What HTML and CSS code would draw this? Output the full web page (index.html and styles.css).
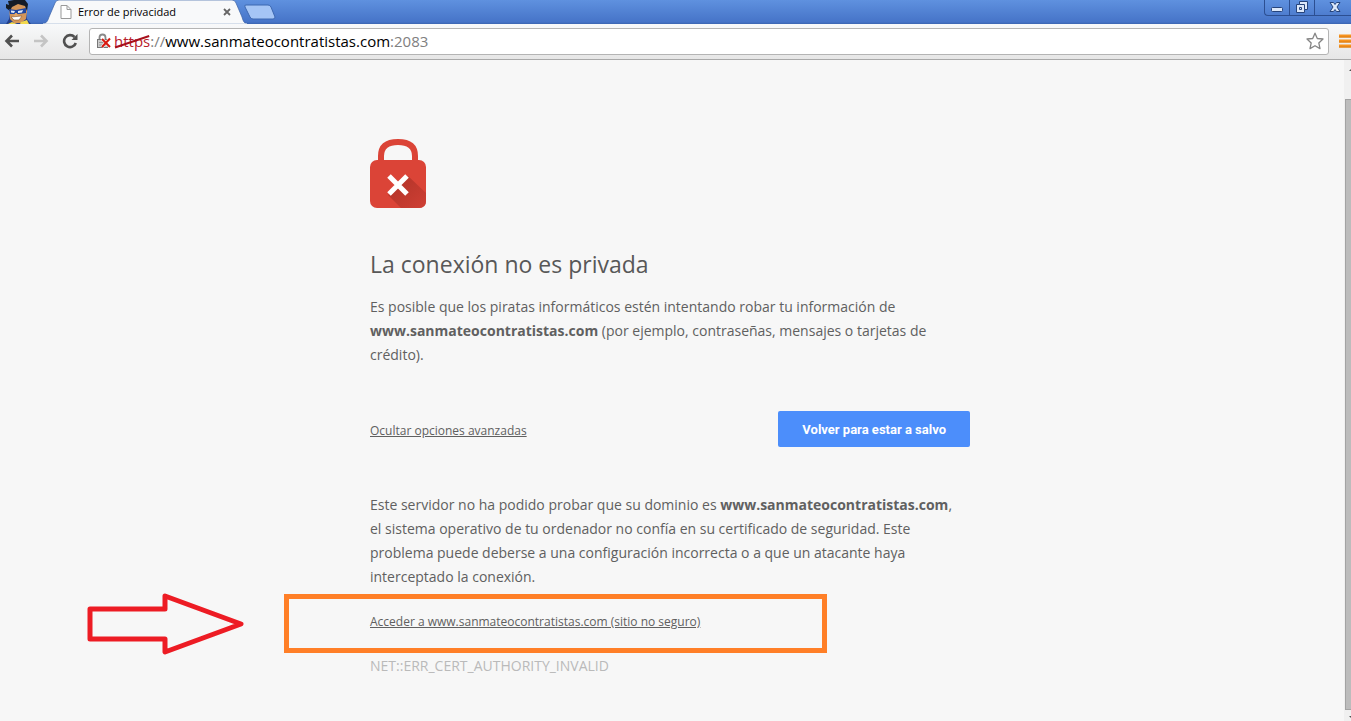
FILE: index.html
```html
<!DOCTYPE html>
<html lang="es">
<head>
<meta charset="utf-8">
<title>Error de privacidad</title>
<link rel="stylesheet" href="styles.css">
</head>
<body>
<header class="titlebar">
  <svg class="avatar" viewBox="0 0 32 24" aria-hidden="true">
    <path d="M10 14 26 12 27 19 31 24H6l3-5Z" fill="#24408c"/>
    <path d="M9 8 12 4 25 4 27 11 26 19 21 23H14L10 19Z" fill="#d39558"/>
    <path d="M6 4 9 5 8 1 14 0H25L28 4 27 11 25 6 18 4 12 7 10 11 6 8Z" fill="#151c26"/>
    <path d="M9 9 16 10 26 8 26 13 19 14 10 14Z" fill="#1e46a0"/>
    <path d="M11 10.500 15 11 14 13 11 12.500ZM18 11 23 10 22 12.500 18 13Z" fill="#dfe9f7"/>
    <path d="M15 13 17 13 18 16 14 16Z" fill="#e0a76b"/>
    <path d="M11 17 22 16 19 20 14 20Z" fill="#fff" stroke="#8a5a35" stroke-width=".6"/>
    <path d="M8 24 12 22 17 24ZM21 22 27 20 29 24H20Z" fill="#f3d94d"/>
  </svg>
  <div class="tab">
    <svg class="tab-shape" viewBox="0 0 204 24" preserveAspectRatio="none" aria-hidden="true">
      <path d="M0 24C4 23 5 20 6 17L12 3Q13 0 16 0H189Q192 0 193 3L199 17C200 21 201 23 204 24Z" fill="#f8f9fa" stroke="#3b62a5" stroke-width=".7"/>
      <path d="M0 23.500H204V24H0Z" fill="#f8f9fa"/>
    </svg>
    <svg class="file-icon" viewBox="0 0 12 14" aria-hidden="true"><path d="M1 .5H7L11 4.500V13.500H1ZM7 .5V4.500H11" fill="#fff" stroke="#999"/></svg>
    <span class="tab-title">Error de privacidad</span>
    <button class="tab-close" aria-label="Cerrar pestaña"><svg viewBox="0 0 8 8"><path d="M1 1 7 7M7 1 1 7" stroke="#666" stroke-width="1.800"/></svg></button>
  </div>
  <button class="new-tab" aria-label="Nueva pestaña">
    <svg viewBox="0 0 32 16"><path d="M2 1H24Q26 1 27 3L31 13Q31 15 29 15H9Q7 15 6 13L1 3Q0 1 2 1Z" fill="#a5c5f5" stroke="#3d68b1"/></svg>
  </button>
  <div class="window-controls">
    <button aria-label="Minimizar"><svg viewBox="0 0 14 14"><rect x="1.500" y="7.500" width="11" height="4" rx="1" fill="#dce8fa" stroke="#26447c"/></svg></button>
    <button aria-label="Restaurar"><svg viewBox="0 0 14 14"><path d="M4.500 1.500H12.500V9.500H9.500V12.500H1.500V4.500H4.500Z" fill="#dce8fa" stroke="#26447c"/><path d="M4.500 4.500H9.500V9.500M4.500 7.500H6.500V9.500H4.500Z" fill="none" stroke="#26447c"/></svg></button>
    <button class="close" aria-label="Cerrar"><svg viewBox="0 0 14 14"><path d="M2 2.500H5.500L7 4.500 8.500 2.500H12L9 7 12 11.500H8.500L7 9.500 5.500 11.500H2L5 7Z" fill="#dce8fa" stroke="#26447c"/></svg></button>
  </div>
</header>

<nav class="toolbar">
  <button class="nav-btn" aria-label="Atrás"><svg viewBox="0 0 16 16"><path d="M15 8H2.500M8 2.500 2.500 8 8 13.500" fill="none" stroke="#505050" stroke-width="2.600"/></svg></button>
  <button class="nav-btn" aria-label="Adelante"><svg viewBox="0 0 16 16"><path d="M1 8H13.500M8 2.500 13.500 8 8 13.500" fill="none" stroke="#c4c4c4" stroke-width="2.600"/></svg></button>
  <button class="nav-btn" aria-label="Recargar"><svg viewBox="0 0 16 16"><path d="M12.500 4A6 6 0 1 0 13.800 10" fill="none" stroke="#505050" stroke-width="2.600"/><path d="M15.500 1V7H9.500Z" fill="#505050"/></svg></button>
  <div class="omnibox">
    <svg class="cert-icon" viewBox="0 0 16 16" aria-hidden="true">
      <path d="M3.500 7V4.500Q3.500 1.500 6.500 1.500T9.500 4.500V7" fill="none" stroke="#888" stroke-width="1.800"/>
      <rect x="1.500" y="6.500" width="10" height="8" fill="#ccc" stroke="#777"/><path d="M3 9.500H10M3 12H10" stroke="#999"/>
      <path d="M6 6 14 14M14 5.500 6 14" stroke="#fff" stroke-width="3"/><path d="M6 6 14 14M14 5.500 6 14" stroke="#d8180e" stroke-width="2"/>
    </svg>
    <div class="url"><span class="scheme">https<svg class="strike" viewBox="0 0 36 14" preserveAspectRatio="none" aria-hidden="true"><path d="M1 12.500 35 1" stroke="#a8101c" stroke-width="2"/></svg></span><span class="dim">://</span>www.sanmateocontratistas.com<span class="dim">:2083</span></div>
    <button class="star" aria-label="Añadir a marcadores"><svg viewBox="0 0 18 18"><path d="M9 1.200 11.300 6.500 17 7 12.800 10.900 14 16.600 9 13.700 4 16.600 5.200 10.900 1 7 6.700 6.500Z" fill="#fff" stroke="#858585" stroke-width="1.300" stroke-linejoin="round"/></svg></button>
  </div>
  <button class="menu" aria-label="Menú"><svg viewBox="0 0 12 14"><path d="M0 2H12M0 7H12M0 12H12" stroke="#f7931e" stroke-width="3"/><path d="M0 3H12M0 8H12M0 13H12" stroke="#d97a10"/></svg></button>
</nav>

<div class="viewport">
  <main class="page">
    <div class="interstitial">
      <svg class="lock" viewBox="0 0 56 69" role="img" aria-label="Conexión no segura">
        <defs><linearGradient id="shade" x1="0" y1="0" x2="1" y2="1"><stop offset=".2" stop-color="#b5352a"/><stop offset="1" stop-color="#cf3f34"/></linearGradient></defs>
        <path d="M11 23V17Q11 3 28 3T45 17V23" fill="none" stroke="#db4437" stroke-width="6"/>
        <rect y="21" width="56" height="48" rx="7" fill="#db4437"/>
        <path d="M38 37 56 54V62Q56 69 49 69H31L18 56Z" fill="url(#shade)"/>
        <path d="M19 37 37 55M37 37 19 55" stroke="#fff" stroke-width="5"/>
      </svg>
      <h1>La conexión no es privada</h1>
      <p>Es posible que los piratas informáticos estén intentando robar tu información de <strong>www.sanmateocontratistas.com</strong> (por ejemplo, contraseñas, mensajes o tarjetas de crédito).</p>
      <div class="actions">
        <a class="link" href="#details">Ocultar opciones avanzadas</a>
        <button class="safe">Volver para estar a salvo</button>
      </div>
      <p id="details">Este servidor no ha podido probar que su dominio es <strong>www.sanmateocontratistas.com</strong>,<br>el sistema operativo de tu ordenador no confía en su certificado de seguridad. Este<br>problema puede deberse a una configuración incorrecta o a que un atacante haya<br>interceptado la conexión.</p>
      <div class="proceed">
        <a class="link" href="#proceed">Acceder a www.sanmateocontratistas.com (sitio no seguro)</a>
        <span class="highlight"></span>
        <svg class="arrow" viewBox="0 0 158 62" aria-hidden="true"><path d="M3 16H78V3L154 31 78 59V46H3Z" fill="none" stroke="#ed1c24" stroke-width="5" stroke-linejoin="round"/></svg>
      </div>
      <div class="code">NET::ERR_CERT_AUTHORITY_INVALID</div>
    </div>
  </main>
  <div class="scrollbar">
    <svg class="scroll-up" viewBox="0 0 7 39" aria-hidden="true"><path d="M4 11 8 7V11Z" fill="#505050"/></svg>
    <div class="thumb"></div>
    <svg class="scroll-down" viewBox="0 0 7 11" aria-hidden="true"><path d="M4 6H8V10Z" fill="#505050"/></svg>
  </div>
</div>
</body>
</html>
```
FILE: styles.css
```css
* { box-sizing: border-box; }
body {
  margin: 0;
  min-height: 100vh;
  display: flex;
  flex-direction: column;
  overflow: hidden;
  background: #f7f7f7;
  color: #606060;
  font-family: "Open Sans", "Noto Sans", sans-serif;
  font-size: 14px;
}
button { margin: 0; padding: 0; border: 0; background: none; font: inherit; cursor: pointer; }
svg { display: block; }

.titlebar {
  display: flex;
  height: 24px;
  background: linear-gradient(#5f91df, #4674c8 22px, #3a64b0);
}
.avatar { width: 32px; height: 24px; }
.tab {
  position: relative;
  display: flex;
  align-items: center;
  width: 204px;
  margin-left: 11px;
  padding: 0 16px 0 17px;
  color: #000;
}
.tab-shape { position: absolute; inset: 0; width: 100%; height: 100%; }
.file-icon { position: relative; width: 12px; height: 14px; }
.tab-title { position: relative; flex: 1; margin-left: 6px; padding-bottom: 2px; font-size: 11px; white-space: nowrap; }
.tab-close { position: relative; width: 8px; height: 8px; }
.new-tab { width: 32px; height: 16px; margin: 4px 0 0 -3px; }
.window-controls {
  display: flex;
  height: 16px;
  margin-left: auto;
  border: solid #2c4f92;
  border-width: 0 0 1px 1px;
  border-radius: 0 0 0 4px;
}
.window-controls button { width: 25px; border-right: 1px solid #2c4f92; display: flex; justify-content: center; }
.window-controls .close { width: 36px; padding-left: 4px; border: 0; }
.window-controls svg { width: 14px; height: 14px; }

.toolbar {
  display: flex;
  align-items: center;
  height: 36px;
  padding: 0 0 1px 4px;
  background: linear-gradient(#f8f9fa, #e6e6e6);
  border-bottom: 1px solid #a9a9a9;
}
.nav-btn { width: 16px; height: 16px; margin-right: 13px; }
.omnibox {
  flex: 1;
  display: flex;
  align-items: center;
  height: 27px;
  margin-left: -2px;
  padding: 0 4px 0 6px;
  background: #fff;
  border: 1px solid #b4b4b4;
  border-radius: 3px;
}
.cert-icon { width: 16px; height: 16px; }
.url { flex: 1; margin-left: 2px; color: #000; font-size: 15px; line-height: 24px; }
.scheme { position: relative; color: #b8202c; }
.strike { position: absolute; left: 0; top: 4px; width: 100%; height: 14px; }
.dim { color: #808080; }
.star { width: 18px; height: 18px; }
.menu { width: 12px; height: 14px; margin-left: 10px; }
.menu svg { width: 12px; height: 14px; }

.viewport { flex: 1; display: flex; }
.page { flex: 1; padding: 79px 8px 0 4px; }
.interstitial { max-width: 600px; margin: 0 auto; line-height: 24px; }
.lock { width: 56px; height: 69px; }
h1 { margin: 40px 0 15px; color: #585858; font-size: 23px; font-weight: 400; line-height: 32px; }
p { margin: 0; }
.actions { display: flex; justify-content: space-between; align-items: flex-end; margin: 44px 0 46px; }
.actions .link { padding-bottom: 4px; }
.link { color: inherit; font-size: 12px; }
.safe {
  height: 36px;
  padding: 0 24px;
  border-radius: 2px;
  background: #4c8efb;
  color: #fff;
  font: bold 13px Roboto, "Liberation Sans", sans-serif;
}
.proceed { position: relative; margin: 21px 0 20px; }
.proceed .link { display: block; }
.highlight { position: absolute; left: -86px; top: -16px; width: 543px; height: 59px; border: 5px solid #ff7f27; pointer-events: none; }
.arrow { position: absolute; left: -283px; top: -17px; width: 158px; height: 62px; }
.code { color: #bababa; }

.scrollbar { display: flex; flex-direction: column; width: 7px; padding-left: 1px; background: #f0f0f0; overflow: hidden; }
.scroll-up { width: 7px; height: 39px; }
.thumb { flex: 1; width: 15px; background: #bcbcbc; border: 1px solid #a3a3a3; }
.scroll-down { width: 7px; height: 11px; }
```
